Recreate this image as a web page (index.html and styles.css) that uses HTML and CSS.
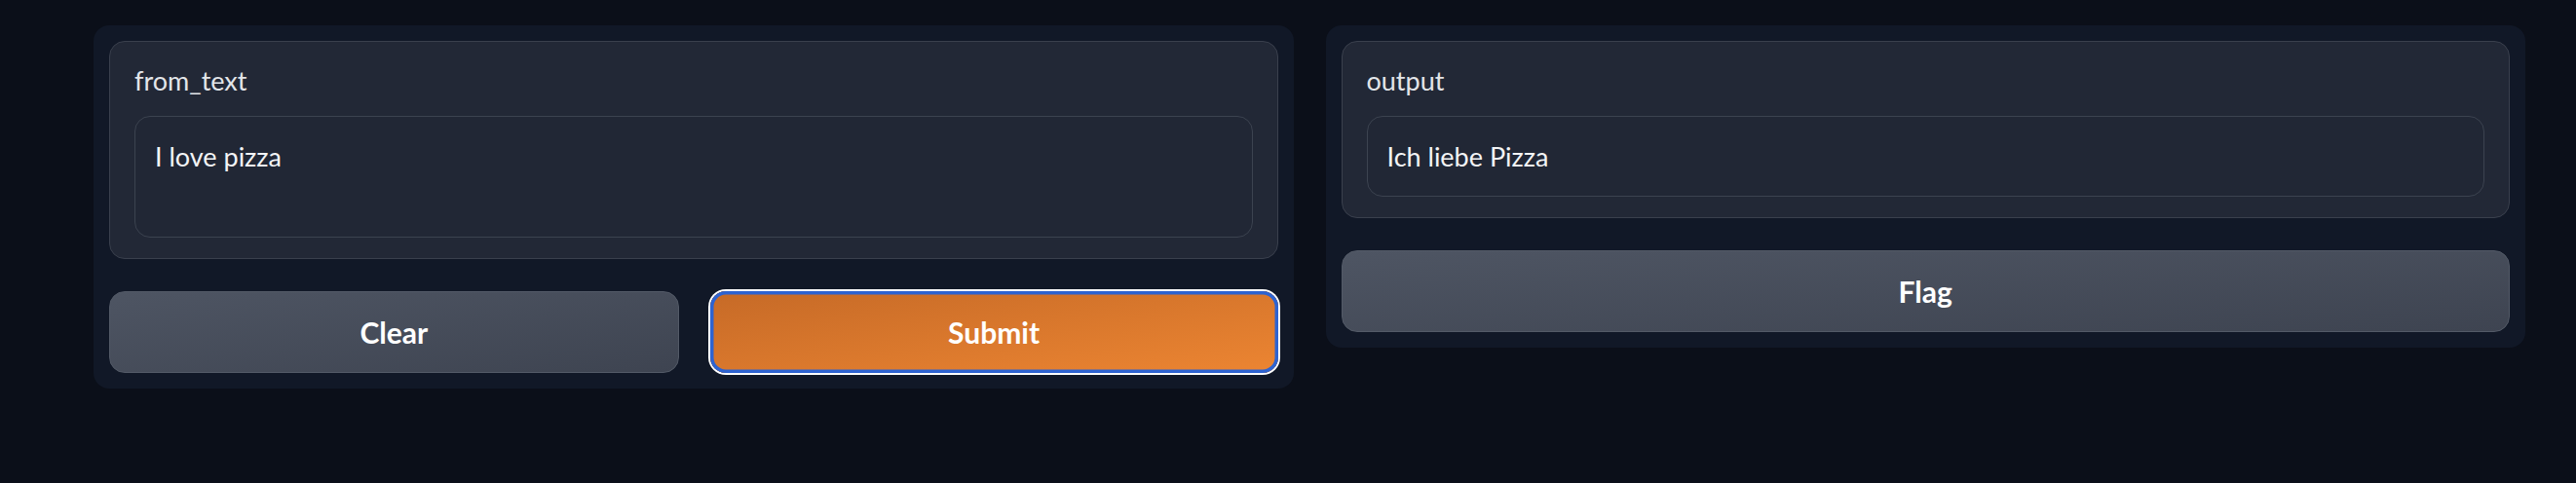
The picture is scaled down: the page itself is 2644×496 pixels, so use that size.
FILE: index.html
```html
<!DOCTYPE html>
<html lang="en">
<head>
<meta charset="utf-8">
<title>Translator</title>
<link rel="stylesheet" href="styles.css">
</head>
<body>
<div class="app">
  <div class="panel">
    <div class="block">
      <span class="label">from_text</span>
      <div class="input tall">I love pizza</div>
    </div>
    <div class="btn-row">
      <button class="btn secondary">Clear</button>
      <button class="btn primary">Submit</button>
    </div>
  </div>
  <div class="panel">
    <div class="block">
      <span class="label">output</span>
      <div class="input">Ich liebe Pizza</div>
    </div>
    <button class="btn secondary single">Flag</button>
  </div>
</div>
</body>
</html>
```
FILE: styles.css
```css
* { box-sizing: border-box; }
body {
  margin: 0;
  background: #0b0f19;
  font-family: Lato, "Liberation Sans", sans-serif;
}
.app {
  display: flex;
  align-items: flex-start;
  gap: 33px;
  margin: 26px 0 0 96px;
  width: 2496px;
}
.panel {
  flex: 1;
  background: #111827;
  border-radius: 16px;
  padding: 16px;
  display: flex;
  flex-direction: column;
  gap: 33px;
}
.block {
  background: #222836;
  border: 1px solid #3a404d;
  border-radius: 16px;
  padding: 22px 25px 21px;
  display: flex;
  flex-direction: column;
}
.label {
  font-size: 27px;
  line-height: 36px;
  color: #e3e5e9;
  margin-bottom: 18px;
}
.input {
  background: #212735;
  border: 1px solid #3c4350;
  border-radius: 16px;
  padding: 19.5px 20px;
  font-size: 27px;
  line-height: 42px;
  color: #f3f4f6;
  min-height: 83px;
}
.input.tall { min-height: 125px; }
.btn-row {
  display: flex;
  gap: 32px;
}
.btn {
  flex: 1;
  height: 84px;
  border-radius: 16px;
  font-family: Lato, "Liberation Sans", sans-serif;
  font-weight: 700;
  font-size: 30px;
  color: #ffffff;
  cursor: pointer;
}
.btn.single {
  flex: 0 0 auto;
  width: 100%;
}
.secondary {
  background: linear-gradient(to bottom right, #4e5563, #3e4451);
  border: 1px solid #535a67;
}
.primary {
  background: linear-gradient(to bottom right, #c66a27, #ec8532);
  border: none;
  box-shadow: 0 0 0 2px #ffffff, inset 0 0 0 3.5px #2d63d1;
}
```
